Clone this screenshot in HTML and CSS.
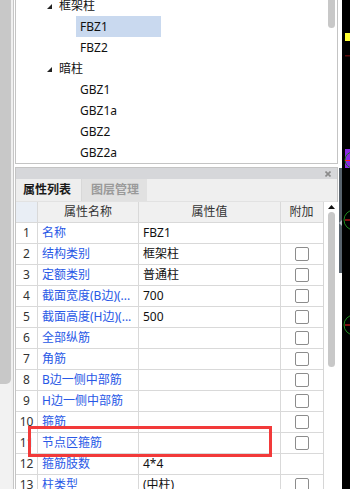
FILE: index.html
```html
<!DOCTYPE html>
<html>
<head>
<meta charset="utf-8">
<link rel="stylesheet" href="styles.css">
</head>
<body>
<div class="app">
  <div class="left-rail"><div class="rail-thumb"></div></div>
  <div class="rail-sep"></div>
  <div class="main">
    <div class="tree-panel">
      <div class="tree">
        <div class="node parent first"><svg class="caret" width="5" height="5" viewBox="0 0 5 5"><polygon points="5,0 5,5 0,5" fill="#222"/></svg><span>框架柱</span></div>
        <div class="node child"><span class="label selected">FBZ1</span></div>
        <div class="node child"><span class="label">FBZ2</span></div>
        <div class="node parent"><svg class="caret" width="5" height="5" viewBox="0 0 5 5"><polygon points="5,0 5,5 0,5" fill="#222"/></svg><span>暗柱</span></div>
        <div class="node child"><span class="label">GBZ1</span></div>
        <div class="node child"><span class="label">GBZ1a</span></div>
        <div class="node child"><span class="label">GBZ2</span></div>
        <div class="node child"><span class="label">GBZ2a</span></div>
      </div>
      <div class="vscroll tree-scroll"><div class="thumb"></div></div>
    </div>
    <div class="panel-gap"></div>
    <div class="prop-panel">
      <div class="titlebar"><svg class="close" width="6" height="6" viewBox="0 0 6 6"><path d="M0.5 0.5 L5.5 5.5 M5.5 0.5 L0.5 5.5" stroke="#8a8a8a" stroke-width="1.6"/></svg></div>
      <div class="tabs">
        <div class="tab active">属性列表</div>
        <div class="tab inactive">图层管理</div>
      </div>
      <div class="grid-wrap">
        <div class="grid">
          <div class="row head"><div class="c num"></div><div class="c name">属性名称</div><div class="c val">属性值</div><div class="c add">附加</div></div>
          <div class="row"><div class="c num">1</div><div class="c name">名称</div><div class="c val">FBZ1</div><div class="c add"></div></div>
          <div class="row"><div class="c num">2</div><div class="c name">结构类别</div><div class="c val">框架柱</div><div class="c add"><span class="box"></span></div></div>
          <div class="row"><div class="c num">3</div><div class="c name">定额类别</div><div class="c val">普通柱</div><div class="c add"><span class="box"></span></div></div>
          <div class="row"><div class="c num">4</div><div class="c name">截面宽度(B边)(...</div><div class="c val">700</div><div class="c add"><span class="box"></span></div></div>
          <div class="row"><div class="c num">5</div><div class="c name">截面高度(H边)(...</div><div class="c val">500</div><div class="c add"><span class="box"></span></div></div>
          <div class="row"><div class="c num">6</div><div class="c name">全部纵筋</div><div class="c val"></div><div class="c add"><span class="box"></span></div></div>
          <div class="row"><div class="c num">7</div><div class="c name">角筋</div><div class="c val"></div><div class="c add"><span class="box"></span></div></div>
          <div class="row"><div class="c num">8</div><div class="c name">B边一侧中部筋</div><div class="c val"></div><div class="c add"><span class="box"></span></div></div>
          <div class="row"><div class="c num">9</div><div class="c name">H边一侧中部筋</div><div class="c val"></div><div class="c add"><span class="box"></span></div></div>
          <div class="row"><div class="c num">10</div><div class="c name">箍筋</div><div class="c val"></div><div class="c add"><span class="box"></span></div></div>
          <div class="row"><div class="c num">11</div><div class="c name">节点区箍筋</div><div class="c val"></div><div class="c add"><span class="box"></span></div></div>
          <div class="row"><div class="c num">12</div><div class="c name">箍筋肢数</div><div class="c val">4*4</div><div class="c add"></div></div>
          <div class="row"><div class="c num">13</div><div class="c name">柱类型</div><div class="c val">(中柱)</div><div class="c add"><span class="box"></span></div></div>
        </div>
        <div class="vscroll grid-scroll">
          <svg class="up" width="7" height="4" viewBox="0 0 7 4"><polygon points="3.5,0 7,4 0,4" fill="#111"/></svg>
          <div class="thumb"></div>
        </div>
      </div>
    </div>
  </div>
  <div class="side-strip">
    <div class="dock-tab"><svg width="3" height="6" viewBox="0 0 3 6"><polygon points="3,0 3,6 0,3" fill="#b8c0c8"/></svg></div>
  </div>
  <div class="canvas">
    <svg width="8" height="489" viewBox="0 0 8 489">
      <rect x="0" y="0" width="8" height="489" fill="#000"/>
      <rect x="3" y="33" width="5" height="8" fill="#ffff33"/>
      <rect x="3" y="55" width="5" height="1.5" fill="#5a0a0a"/>
      <rect x="3" y="149" width="5" height="19" fill="#8a2be2"/>
      <circle cx="11" cy="160" r="8" fill="none" stroke="#1a7a1a" stroke-width="1"/>
      <rect x="3" y="160" width="5" height="1" fill="#ff2020"/>
      <circle cx="12" cy="220" r="10" fill="none" stroke="#1f8a1f" stroke-width="1"/>
      <rect x="3" y="219.5" width="5" height="1" fill="#ff2020"/>
      <circle cx="12" cy="325" r="10" fill="none" stroke="#1f8a1f" stroke-width="1"/>
      <rect x="3" y="324.5" width="5" height="1" fill="#ff2020"/>
    </svg>
  </div>
  <div class="mark-box"></div>
</div>
</body>
</html>
```

FILE: styles.css
```css
html, body {
  margin: 0;
  padding: 0;
  background: #fff;
}
body {
  width: 350px;
  height: 489px;
  overflow: hidden;
  font-family: "Noto Sans", "Noto Sans CJK SC", sans-serif;
  font-size: 12px;
  color: #111;
}
.app {
  position: relative;
  display: flex;
  width: 350px;
  height: 489px;
  overflow: hidden;
}
.left-rail {
  width: 11px;
  background: #f2f2f2;
  flex: none;
}
.rail-thumb {
  height: 384px;
  background: #c8c8c8;
  border-radius: 0 0 5px 0;
}
.rail-sep {
  width: 4px;
  flex: none;
  background: linear-gradient(to right, #f0f0f0 0 2px, #c6c6c6 2px 3px, #fff 3px 4px);
}
.main {
  width: 323px;
  flex: none;
  display: flex;
  flex-direction: column;
}
.tree-panel {
  height: 163px;
  flex: none;
  display: flex;
  border: 1px solid #c4c4c4;
  border-top: none;
  overflow: hidden;
}
.tree {
  flex: 1;
  padding-top: 0;
  margin-top: -5px;
}
.node {
  height: 21px;
  display: flex;
  align-items: center;
  line-height: 21px;
  white-space: nowrap;
}
.node.parent {
  padding-left: 31px;
}
.caret {
  margin-right: 7px;
  margin-top: 1px;
}
.node.child {
  padding-left: 60px;
}
.label {
  display: block;
  width: 81px;
  padding-left: 4px;
  height: 21px;
}
.label.selected {
  background: #c9d9ef;
}
.vscroll {
  position: relative;
  width: 14px;
  flex: none;
  background: #fff;
}
.tree-scroll .thumb {
  position: absolute;
  left: 5px;
  top: 0;
  width: 7px;
  height: 28px;
  background: #c8c8c8;
  border-radius: 0 0 4px 4px;
}
.panel-gap {
  height: 3px;
  flex: none;
}
.prop-panel {
  flex: 1;
  display: flex;
  flex-direction: column;
  border: 1px solid #c4c4c4;
  border-bottom: none;
  min-height: 0;
}
.titlebar {
  height: 11px;
  flex: none;
  background: #d6d7da;
  display: flex;
  justify-content: flex-end;
  align-items: center;
  padding-right: 6px;
}
.close {
  display: block;
}
.tabs {
  height: 22px;
  flex: none;
  display: flex;
  background: #efefef;
  border-bottom: 1px solid #e2e2e2;
}
.tab {
  height: 22px;
  line-height: 22px;
  padding: 0 8px 0 7px;
  font-weight: bold;
  box-sizing: border-box;
}
.tab.active {
  width: 66px;
  background: #eeeeee;
  color: #1a1a1a;
  border-right: 1px solid #d8d8d8;
}
.tab.inactive {
  width: 65px;
  background: #e1e1e1;
  color: #9a9a9a;
  padding-left: 9px;
}
.grid-wrap {
  flex: 1;
  display: flex;
  min-height: 0;
}
.grid {
  width: 307px;
  flex: none;
  border-right: 1px solid #d6d6d6;
}
.row {
  display: grid;
  grid-template-columns: 22px 101px 142px 41px;
  height: 21px;
  box-sizing: border-box;
  border-bottom: 1px solid #d9d9d9;
}
.c {
  border-right: 1px solid #d9d9d9;
  line-height: 20px;
  white-space: nowrap;
  overflow: hidden;
  padding-left: 4px;
}
.c.add {
  border-right: none;
  display: flex;
  align-items: center;
  justify-content: center;
  padding-left: 0;
}
.c.num {
  text-align: center;
  padding-left: 0;
  color: #333;
  background: #fff;
}
.c.name {
  color: #2858e6;
}
.c.val {
  color: #111;
}
.row.head {
  background: #f0f0f0;
}
.row.head .c {
  text-align: center;
  color: #333;
  padding-left: 0;
}
.row.head .c.num {
  background: #e9eef5;
}
.box {
  display: block;
  width: 12px;
  height: 12px;
  border: 1px solid #8c8c8c;
  border-radius: 2px;
  background: #fff;
}
.grid-scroll .up {
  position: absolute;
  left: 4px;
  top: 3px;
}
.grid-scroll .thumb {
  position: absolute;
  left: 4px;
  top: 10px;
  width: 7px;
  height: 155px;
  background: #c8c8c8;
  border-radius: 4px;
}
.side-strip {
  width: 4px;
  flex: none;
  position: relative;
  background: #fff;
}
.dock-tab {
  position: absolute;
  left: 1px;
  top: 168px;
  width: 3px;
  height: 105px;
  background: #59636d;
  display: flex;
  align-items: flex-start;
  padding-top: 52px;
  box-sizing: border-box;
}
.dock-tab svg {
  display: block;
}
.canvas {
  width: 8px;
  flex: none;
}
.canvas svg {
  display: block;
}
.mark-box {
  position: absolute;
  left: 28px;
  top: 426px;
  width: 238px;
  height: 25px;
  border: 3px solid #f23a3a;
}
```
